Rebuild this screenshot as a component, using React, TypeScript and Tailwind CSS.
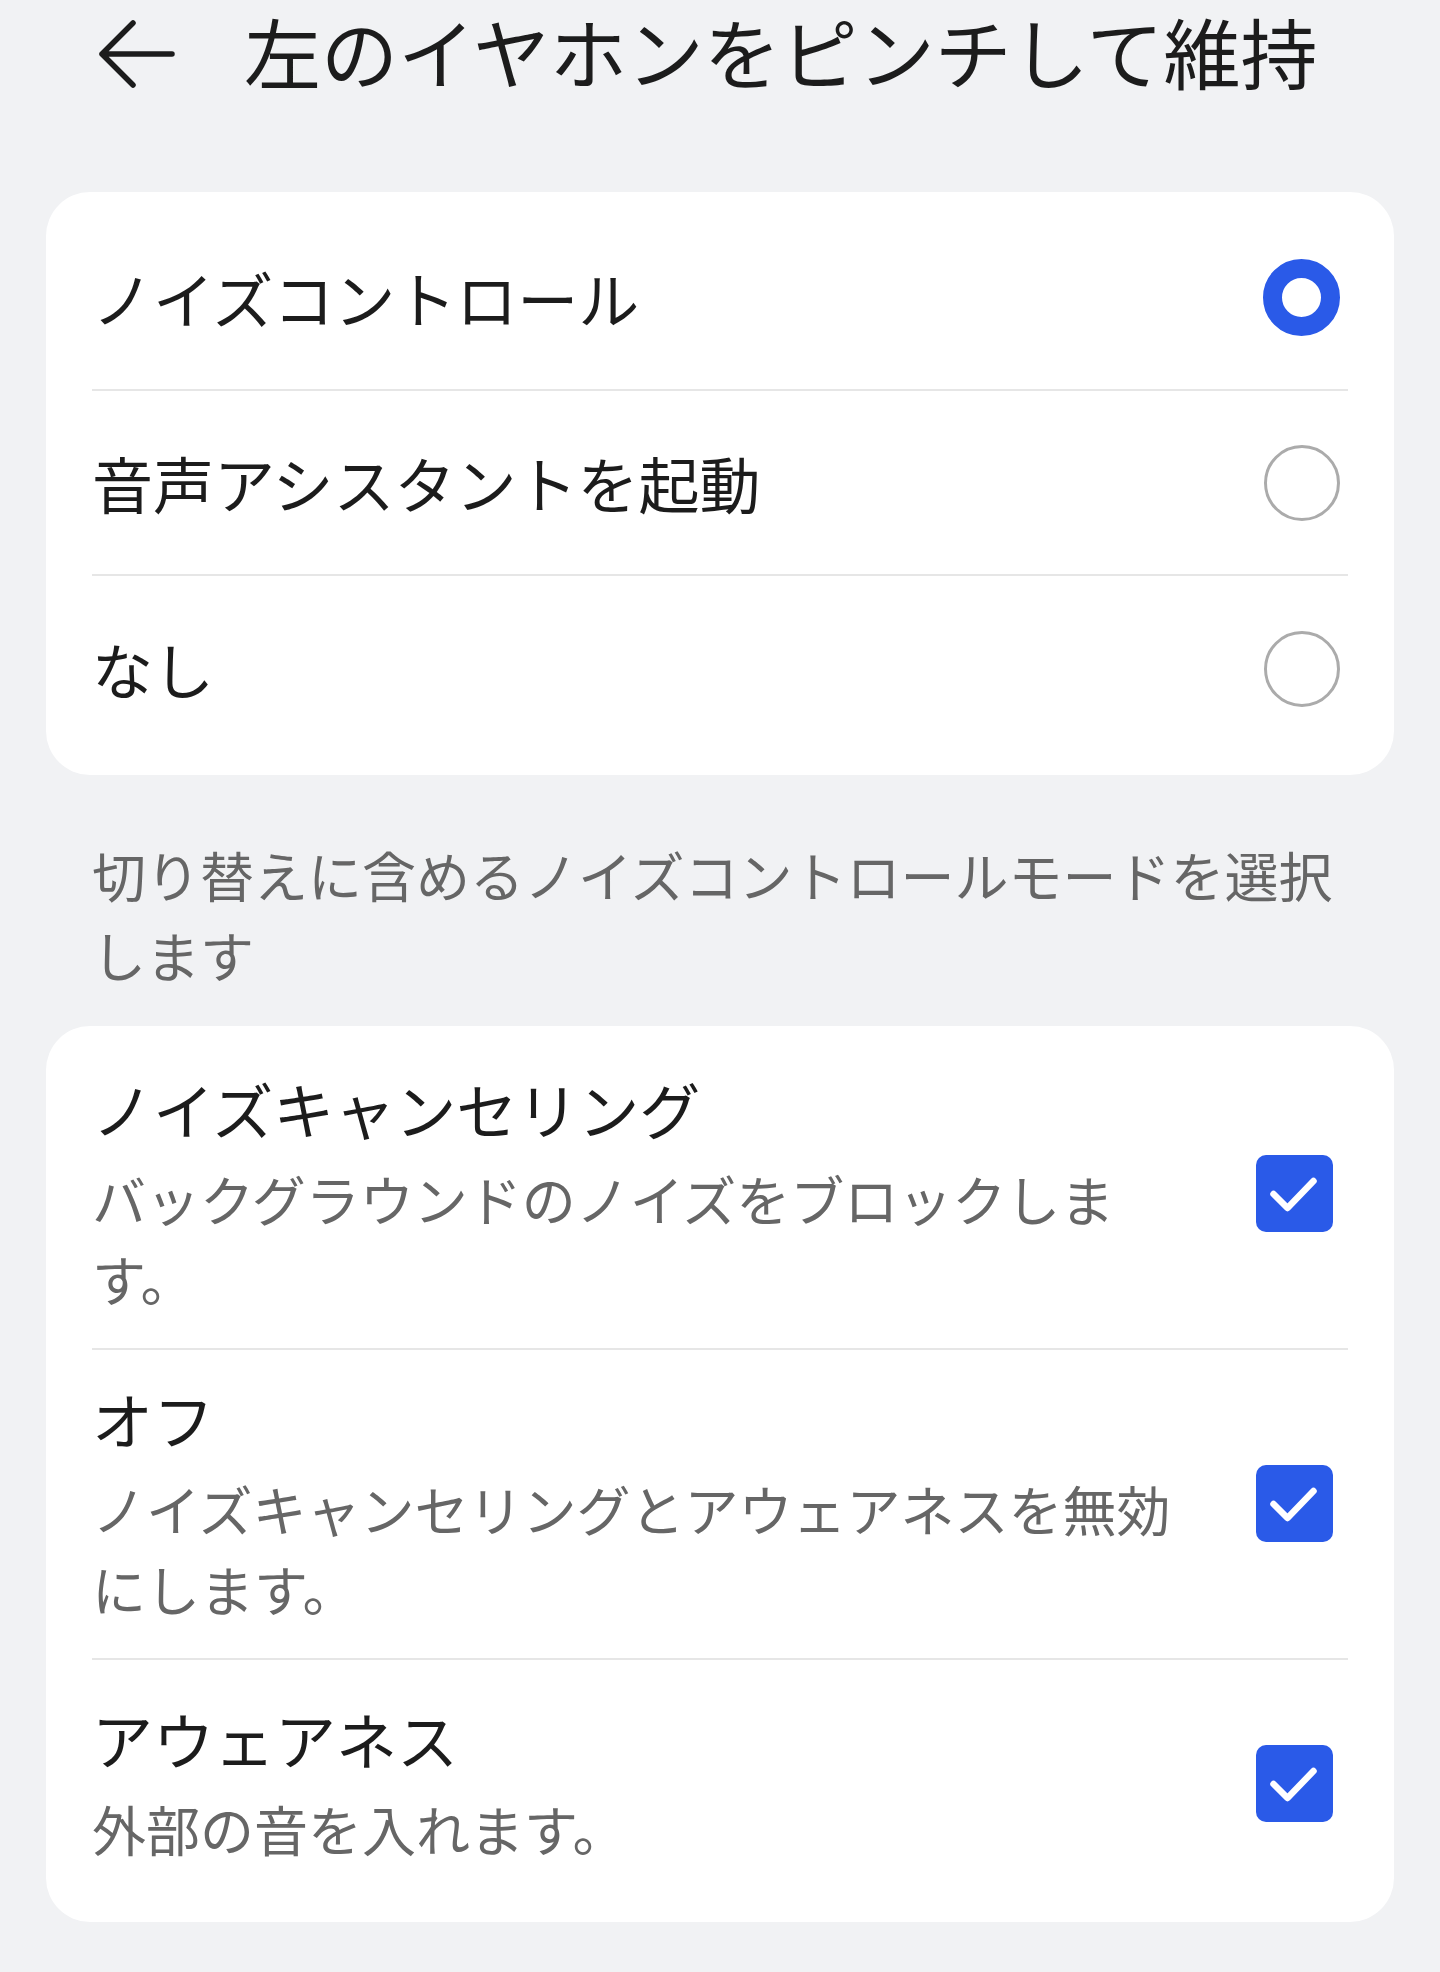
import { Fragment } from 'react';

const modes = [
  { label: 'ノイズコントロール', selected: true },
  { label: '音声アシスタントを起動', selected: false },
  { label: 'なし', selected: false },
];

const noiseModes = [
  { title: 'ノイズキャンセリング', desc: 'バックグラウンドのノイズをブロックします。' },
  { title: 'オフ', desc: 'ノイズキャンセリングとアウェアネスを無効にします。' },
  { title: 'アウェアネス', desc: '外部の音を入れます。' },
];

function BackArrow() {
  return (
    <svg width="80" height="80" viewBox="0 0 80 80" fill="none">
      <path
        d="M6 43 H76 M37 12 L6 43 L37 74"
        stroke="#1c1c1c"
        strokeWidth="5.5"
        strokeLinecap="round"
        strokeLinejoin="round"
      />
    </svg>
  );
}

function Radio({ checked }: { checked: boolean }) {
  if (checked) {
    return <div className="w-[77px] h-[77px] rounded-full border-[19px] border-[#2a5ae8] bg-white mr-[8px]" />;
  }
  return <div className="w-[76px] h-[76px] rounded-full border-[3px] border-[#ababab] bg-white mr-[8px]" />;
}

function CheckBox() {
  return (
    <div className="w-[77px] h-[77px] shrink-0 rounded-[10px] bg-[#2a5ae8] mr-[15px] flex items-center justify-center">
      <svg width="77" height="77" viewBox="0 0 77 77" fill="none">
        <path
          d="M17.5 39 L31.5 53 L57.5 26"
          stroke="white"
          strokeWidth="6.5"
          strokeLinecap="round"
          strokeLinejoin="round"
        />
      </svg>
    </div>
  );
}

export default function App() {
  return (
    <div className="w-[1440px] min-h-[1972px] bg-[#f1f2f4] font-['Noto_Sans_CJK_JP','Noto_Sans',sans-serif] text-[#1c1c1c]">
      {/* Header */}
      <div className="h-[102px] flex items-center pl-[96px]">
        <BackArrow />
        <h1 className="ml-[68px] text-[77px] leading-[102px] font-normal">左のイヤホンをピンチして維持</h1>
      </div>

      {/* Pinch action */}
      <div className="mx-[46px] mt-[90px] rounded-[44px] bg-white px-[46px] py-[14px]">
        {modes.map((mode, i) => (
          <div
            key={mode.label}
            className={
              i < modes.length - 1
                ? 'h-[185px] flex items-center justify-between border-b-2 border-[#e6e6e6]'
                : 'h-[185px] flex items-center justify-between'
            }
          >
            <span className="text-[61px] leading-[84px]">{mode.label}</span>
            <Radio checked={mode.selected} />
          </div>
        ))}
      </div>

      <p className="px-[92px] mt-[60px] mb-[31px] text-[54px] leading-[80px] text-[#666666]">
        切り替えに含めるノイズコントロールモードを選択します
      </p>

      {/* Noise control modes */}
      <div className="mx-[46px] rounded-[44px] bg-white px-[46px] py-[14px]">
        {noiseModes.map((mode, i) => (
          <Fragment key={mode.title}>
            <div
              className={
                i < noiseModes.length - 1
                  ? 'min-h-[248px] pt-[27px] pb-[29px] flex items-center justify-between border-b-2 border-[#e6e6e6]'
                  : 'min-h-[248px] pt-[27px] pb-[29px] flex items-center justify-between'
              }
            >
              <div className="w-[1100px]">
                <div className="text-[61px] leading-[84px]">{mode.title}</div>
                <div className="mt-[8px] text-[54px] leading-[80px] text-[#666666]">{mode.desc}</div>
              </div>
              <CheckBox />
            </div>
          </Fragment>
        ))}
      </div>
    </div>
  );
}
